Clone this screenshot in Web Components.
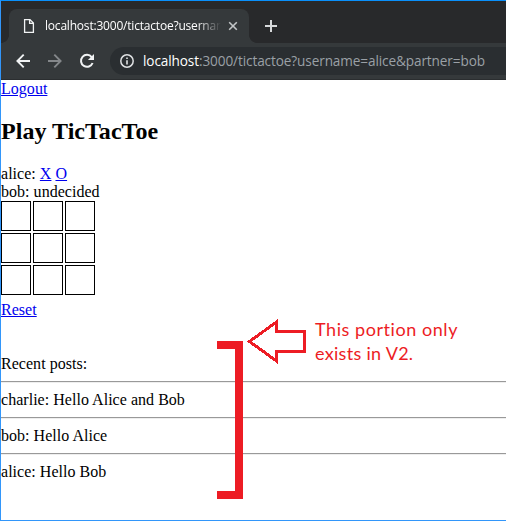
<!DOCTYPE html>
<html lang="en"><head><meta charset="utf-8"><title>TicTacToe</title>
<style>html,body{margin:0;height:521px;overflow:hidden;background:#fff}</style></head>
<body>
<app-window>
  <browser-bar slot="bar"></browser-bar>
  <game-page></game-page>
  <note-callout slot="note">This portion only<br><span style="letter-spacing:.3px">exists in V2.</span></note-callout>
</app-window>
<script>
const define=(name,html)=>customElements.define(name,class extends HTMLElement{
  constructor(){super();this.attachShadow({mode:'open'}).innerHTML=html;}
});
define('app-window',`<style>
:host{display:flex;flex-direction:column;position:relative;box-sizing:border-box;width:506px;height:521px;border:solid #3296fa;border-width:1px 0 1px 1px;border-top-color:#0a90fb;background:#fff;overflow:hidden}
</style><slot name="bar"></slot><slot></slot><slot name="note"></slot>`);
define('browser-tab',`<style>
:host{display:flex;align-items:center;box-sizing:border-box;width:240px;height:34px;background:#35393b;border-radius:8px 8px 0 0;position:relative;padding:0 11px 0 14px;color:#fff;font:12px/16px "Open Sans",sans-serif}
:host::before,:host::after{content:"";position:absolute;bottom:0;width:8px;height:8px}
:host::before{left:-8px;background:radial-gradient(circle at 0 0,#28292b 7.6px,#35393b 8.2px)}
:host::after{right:-8px;background:radial-gradient(circle at 100% 0,#28292b 7.6px,#35393b 8.2px)}
.t{width:176px;margin:0 6px 0 10px;overflow:hidden;white-space:nowrap;letter-spacing:-.2px;-webkit-mask:linear-gradient(90deg,#000 152px,transparent 176px);mask:linear-gradient(90deg,#000 152px,transparent 176px)}
svg{flex:none}
</style>
<svg width="12" height="16" viewBox="0 0 12 16" fill="none" stroke="#f1f3f4" stroke-width="1.3"><path d="M1.6 1.6H7L10.4 5V14.3H1.6zM6.6 1.6V5.4H10.4"/></svg>
<span class="t"><slot></slot></span>
<svg width="10" height="10" viewBox="0 0 10 10" stroke="#c3c6c8" stroke-width="1.6" style="margin-left:1px"><path d="M1.2 1.2 8.8 8.8M8.8 1.2 1.2 8.8"/></svg>`);
define('address-field',`<style>
:host{display:flex;align-items:center;box-sizing:border-box;height:28px;flex:1;background:#2a2e31;border-radius:14px 0 0 14px;padding-left:10px;color:#9aa0a6;font:13.6px/20px "Open Sans",sans-serif;letter-spacing:-.11px;white-space:nowrap}
svg{margin-right:9px;flex:none}b{font-weight:400;color:#fff}
</style><svg width="14" height="14" viewBox="0 0 14 14"><circle cx="7" cy="7" r="6.2" fill="none" stroke="#dfe1e3" stroke-width="1.5"/><path d="M6.2 3.5h1.6v1.6H6.2zM6.2 6.2h1.6v4.3H6.2z" fill="#dfe1e3"/></svg><span class="u"><b>localhost</b><slot></slot></span>`);
define('browser-bar',`<style>
:host{display:block;height:79px;background:#35393b;flex:none}
.tabs{height:42px;box-sizing:border-box;background:#28292b;padding:8px 0 0 8px;display:flex}
.plus{margin:11px 0 0 16px}
.tools{height:37px;box-sizing:border-box;padding:4px 0 0 15px;display:flex;border-bottom:1px solid #2b2e30}
.i{margin-top:6px;flex:none}.f{margin-left:18px}.r{margin-left:17px}
address-field{margin-left:15px}
</style><div class="tabs"><browser-tab>localhost:3000/tictactoe?username=alice</browser-tab>
<svg class="plus" width="12" height="12" viewBox="0 0 12 12" stroke="#d7d9db" stroke-width="2"><path d="M6 0V12M0 6H12"/></svg></div>
<div class="tools">
<svg class="i" width="14" height="16" viewBox="0 0 14 16" fill="none" stroke="#f1f3f4" stroke-width="1.9"><path d="M14 8H1.5M7.7 1.7 1.4 8 7.7 14.3"/></svg>
<svg class="i f" width="14" height="16" viewBox="0 0 14 16" fill="none" stroke="#84878a" stroke-width="1.9"><path d="M0 8H12.5M6.3 1.7 12.6 8 6.3 14.3"/></svg>
<svg class="i r" width="16" height="16" viewBox="0 0 16 16"><path d="M12.7 4.1A6 6 0 1 0 13.6 10" fill="none" stroke="#f1f3f4" stroke-width="2"/><path d="M15 1V7.1H8.9z" fill="#f1f3f4"/></svg>
<address-field>:3000/tictactoe?username=alice&amp;partner=bob</address-field></div>`);
define('game-board',`<style>
:host{display:grid;grid-template:repeat(3,30px)/repeat(3,30px);gap:2px}
i{border:1px solid #000}</style>${'<i></i>'.repeat(9)}`);
define('post-item',`<style>:host{display:block}hr{margin:8px 0;border:0;border-top:1px solid #999;border-bottom:1px solid #eee}</style><hr><slot></slot>`);
define('game-page',`<style>
:host{display:block;font:16px/18px "Liberation Serif",serif;letter-spacing:.03px;color:#000}
h2{font-size:24px;line-height:27px;margin:20px 0}a{color:#00e;text-decoration:underline}
.reset{margin:6px 0 36px}</style>
<div><a>Logout</a></div><h2>Play TicTacToe</h2>
<div>alice: <a>X</a> <a>O</a></div><div>bob: undecided</div>
<game-board></game-board><div class="reset"><a>Reset</a></div>
<div>Recent posts:</div>
<post-item>charlie: Hello Alice and Bob</post-item><post-item>bob: Hello Alice</post-item><post-item>alice: Hello Bob</post-item>`);
define('note-callout',`<style>
:host{position:absolute;left:216px;top:317px;width:290px;height:184px;color:#ed1c24;font:18px/24px Lato,sans-serif}
svg{position:absolute;left:0;top:0}
.t{position:absolute;left:98px;top:-1px;white-space:nowrap;letter-spacing:.56px}
</style><svg width="92" height="184" viewBox="217 318 92 184" shape-rendering="crispEdges"><path d="M217 341H243V499H217V491H235V349H217z" fill="#ed1c24"/><path d="M249.5 341.5 276.5 322V331.5H304.5V351.5H276.5V361z" fill="none" stroke="#ed1c24" stroke-width="3"/></svg><div class="t"><slot></slot></div>`);
</script>
</body></html>
